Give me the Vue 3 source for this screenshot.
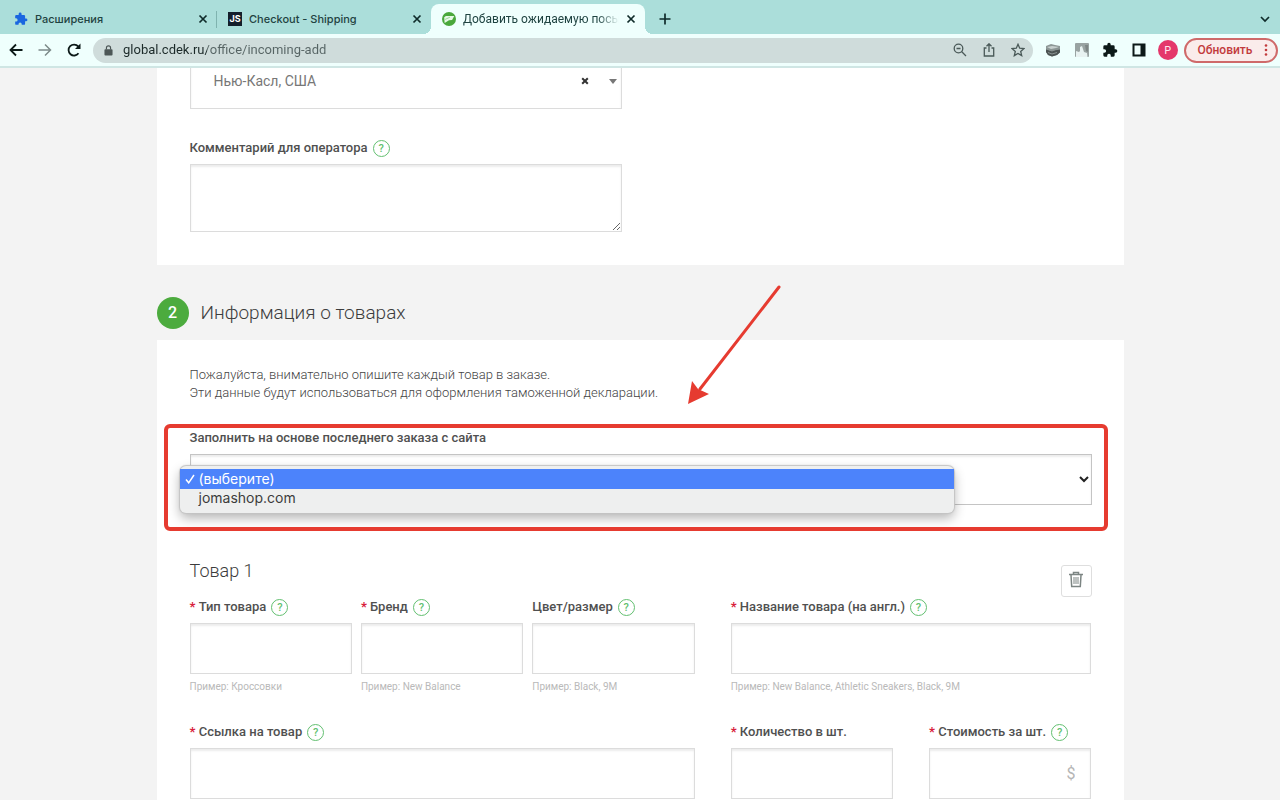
<script setup>
import { ref } from 'vue'

const tabs = [
  { title: 'Расширения', icon: 'puzzle' },
  { title: 'Checkout - Shipping', icon: 'js' },
  { title: 'Добавить ожидаемую посылк', icon: 'cdek', active: true },
]

const address = ref('global.cdek.ru/office/incoming-add')

const goodsLeft = [
  { id: 'kind', label: 'Тип товара', required: true, hint: 'Пример: Кроссовки' },
  { id: 'brand', label: 'Бренд', required: true, hint: 'Пример: New Balance' },
  { id: 'color', label: 'Цвет/размер', required: false, hint: 'Пример: Black, 9M' },
]
</script>

<template>
  <div class="browser">
    <header class="tabbar">
      <div v-for="t in tabs" :key="t.title" class="tab" :class="{ active: t.active }">
        <svg v-if="t.icon === 'puzzle'" class="favicon" viewBox="0 0 24 24" aria-hidden="true">
          <path fill="#1a66e0" d="M20.500 11H19V7a2 2 0 0 0-2-2h-4V3.500a2.500 2.500 0 0 0-5 0V5H4a2 2 0 0 0-2 2v3.800h1.500a2.700 2.700 0 0 1 0 5.400H2V20a2 2 0 0 0 2 2h3.800v-1.500a2.700 2.700 0 0 1 5.400 0V22H17a2 2 0 0 0 2-2v-4h1.500a2.500 2.500 0 0 0 0-5z" />
        </svg>
        <span v-else-if="t.icon === 'js'" class="favicon js">JS</span>
        <svg v-else class="favicon" viewBox="0 0 16 16" aria-hidden="true">
          <circle cx="8" cy="8" r="8" fill="#4aa83c" />
          <path fill="#e6f8e6" d="M2.500 6l2-1.500h9.500L11.500 9 8 9.500 3 12.500z" />
          <path fill="none" stroke="#8fd08a" stroke-width="1" d="M3.500 8.500L9 6" />
        </svg>
        <span class="tab-title">{{ t.title }}</span>
        <button class="tab-close" aria-label="Закрыть вкладку">
          <svg viewBox="0 0 10 10"><path d="M1.500 1.500l7 7M8.500 1.500l-7 7" /></svg>
        </button>
      </div>
      <button class="tab-new" aria-label="Новая вкладка">
        <svg viewBox="0 0 12 12"><path d="M6 .5v11M.5 6h11" /></svg>
      </button>
      <button class="tab-search" aria-label="Поиск вкладок">
        <svg viewBox="0 0 10 10"><path d="M1 3l4 4 4-4" /></svg>
      </button>
    </header>

    <div class="toolbar">
      <nav class="nav">
        <button aria-label="Назад">
          <svg viewBox="0 0 14 14"><path d="M13.500 7H1.500M7 1.500L1.500 7 7 12.500" /></svg>
        </button>
        <button class="faded" aria-label="Вперёд">
          <svg viewBox="0 0 14 14"><path d="M.5 7h12M7 1.500L12.500 7 7 12.500" /></svg>
        </button>
        <button aria-label="Обновить страницу">
          <svg viewBox="0 0 14 14"><path d="M11.500 10.300A5.500 5.500 0 1 1 11.200 3.400L12.500 4.800" /><path class="solid" d="M13.500 .5v5.500H8z" /></svg>
        </button>
      </nav>

      <div class="omnibox">
        <svg class="lock" viewBox="0 0 10 12" aria-hidden="true">
          <rect x=".5" y="4.500" width="9" height="7" rx="1" fill="#4c5656" />
          <path d="M2.700 5V3.200a2.300 2.300 0 0 1 4.600 0V5" fill="none" stroke="#4c5656" stroke-width="1.300" />
        </svg>
        <input v-model="address" class="url" type="text" aria-label="Адрес" />
        <div class="omni-actions">
          <button aria-label="Масштаб">
            <svg viewBox="0 0 14 14"><circle cx="5.500" cy="5.500" r="4.300" /><path d="M8.800 8.800l4.200 4.200M3.500 5.500h4" /></svg>
          </button>
          <button aria-label="Поделиться">
            <svg viewBox="0 0 14 14"><path d="M4.500 5H2.300v8h9.400V5H9.500M7 9V1M4.500 3.300L7 .8l2.500 2.500" /></svg>
          </button>
          <button aria-label="Добавить в закладки">
            <svg viewBox="0 0 14 14"><path d="M7 1.300l1.700 3.900 4.200.4-3.200 2.800 1 4.200L7 10.400l-3.700 2.200 1-4.200L1.100 5.600l4.200-.4z" /></svg>
          </button>
        </div>
      </div>

      <div class="extensions">
        <button aria-label="Расширение 1">
          <svg viewBox="0 0 16 16">
            <path fill="#8d9796" d="M1 4l5-2 4 1 5 1v6l-3 3-5 1.500L3 13l-2-3z" />
            <path fill="#c7cfce" d="M2 5l5-1 7 1-3 1-5 1z" />
            <path fill="#4b5352" d="M1 7.500l5 1.500 9-1.500v3L12 13l-5 1.500L3 13l-2-3z" />
            <path fill="none" stroke="#8a9392" d="M2 7l5 2 7-3M3 10.500l4 1.500 5-1.500" />
          </svg>
        </button>
        <button aria-label="Расширение 2">
          <svg viewBox="0 0 16 16">
            <rect x="1" y="1" width="14" height="14" rx="1" fill="#99a3a2" />
            <path fill="#e8f2f1" d="M2 15V9l3 1 1-1V5l2-1 1 3 1 3 3 1 .5 4z" />
            <path fill="#7d8685" d="M11 3h3v7l-2-1z" />
          </svg>
        </button>
        <button aria-label="Расширения">
          <svg viewBox="0 0 24 24"><path fill="#0c1918" d="M20.500 11H19V7a2 2 0 0 0-2-2h-4V3.500a2.500 2.500 0 0 0-5 0V5H4a2 2 0 0 0-2 2v3.800h1.500a2.700 2.700 0 0 1 0 5.400H2V20a2 2 0 0 0 2 2h3.800v-1.500a2.700 2.700 0 0 1 5.400 0V22H17a2 2 0 0 0 2-2v-4h1.500a2.500 2.500 0 0 0 0-5z" /></svg>
        </button>
        <button aria-label="Боковая панель">
          <svg viewBox="0 0 16 16"><path fill="#0c1918" fill-rule="evenodd" d="M1.500 1.500h13v13h-13zM3.500 3.500v9h6v-9z" /></svg>
        </button>
        <button class="avatar" aria-label="Профиль"><span>P</span></button>
      </div>

      <button class="update">
        Обновить
        <svg viewBox="0 0 4 12" aria-hidden="true"><circle cx="2" cy="1.500" r="1.300" /><circle cx="2" cy="6" r="1.300" /><circle cx="2" cy="10.500" r="1.300" /></svg>
      </button>
    </div>

    <main class="page">
      <div class="container">
        <section class="card first">
          <div class="half">
            <div class="city">
              <select aria-label="Город доставки"><option>Нью-Касл, США</option></select>
              <button class="clear" aria-label="Очистить">
                <svg viewBox="0 0 8 8"><path d="M1.200 1.200l5.600 5.600M6.800 1.200L1.200 6.800" /></svg>
              </button>
              <svg class="caret" viewBox="0 0 8 5" aria-hidden="true"><path d="M0 0h8L4 5z" /></svg>
            </div>
            <div class="field comment">
              <div class="label-row">
                <label for="comment">Комментарий для оператора</label>
                <button class="help" aria-label="Подсказка">?</button>
              </div>
              <textarea id="comment"></textarea>
            </div>
          </div>
        </section>

        <div class="step">
          <span class="num">2</span>
          <h2>Информация о товарах</h2>
        </div>

        <section class="card second">
          <p class="intro">Пожалуйста, внимательно опишите каждый товар в заказе.<br />Эти данные будут использоваться для оформления таможенной декларации.</p>

          <div class="field template">
            <div class="label-row"><label for="template">Заполнить на основе последнего заказа с сайта</label></div>
            <div class="select-wrap">
              <select id="template"><option></option></select>
              <svg class="chevron" viewBox="0 0 10 7" aria-hidden="true"><path d="M1 1l4 4 4-4" /></svg>
              <ul class="menu" role="listbox" aria-label="Сайт">
                <li class="chosen" role="option" aria-selected="true">
                  <svg viewBox="0 0 10 10" aria-hidden="true"><path d="M1 5.500l2.700 3.300L9 1" /></svg>(выберите)
                </li>
                <li role="option" aria-selected="false">jomashop.com</li>
              </ul>
            </div>
            <div class="frame"></div>
            <svg class="arrow" viewBox="0 0 96 122" aria-hidden="true">
              <path class="shaft" d="M93 3L14 105" />
              <path class="head" d="M2 120l4-23 6 8 11 5z" />
            </svg>
          </div>

          <div class="item-head">
            <h3>Товар 1</h3>
            <button class="trash" aria-label="Удалить товар">
              <svg viewBox="0 0 14 17"><path d="M0 3.500h14M4.500 3V1.500h5V3M2 4l.7 11.500h8.600L12 4" /><path class="bars" d="M5 6v7M7 6v7M9 6v7" /></svg>
            </button>
          </div>

          <div class="cols">
            <div class="thirds">
              <div v-for="f in goodsLeft" :key="f.id" class="field">
                <div class="label-row">
                  <label :for="f.id"><b v-if="f.required">* </b>{{ f.label }}</label>
                  <button class="help" aria-label="Подсказка">?</button>
                </div>
                <input :id="f.id" type="text" />
                <small>{{ f.hint }}</small>
              </div>
            </div>
            <div class="field">
              <div class="label-row">
                <label for="name"><b>* </b>Название товара (на англ.)</label>
                <button class="help" aria-label="Подсказка">?</button>
              </div>
              <input id="name" type="text" />
              <small>Пример: New Balance, Athletic Sneakers, Black, 9M</small>
            </div>
          </div>

          <div class="cols">
            <div class="field">
              <div class="label-row">
                <label for="link"><b>* </b>Ссылка на товар</label>
                <button class="help" aria-label="Подсказка">?</button>
              </div>
              <input id="link" type="text" />
            </div>
            <div class="halves">
              <div class="field">
                <div class="label-row"><label for="qty"><b>* </b>Количество в шт.</label></div>
                <input id="qty" type="text" />
              </div>
              <div class="field">
                <div class="label-row">
                  <label for="cost"><b>* </b>Стоимость за шт.</label>
                  <button class="help" aria-label="Подсказка">?</button>
                </div>
                <input id="cost" class="cost" type="text" placeholder="$" />
              </div>
            </div>
          </div>
        </section>
      </div>
    </main>
  </div>
</template>

<style>
body { margin: 0; }
</style>

<style scoped>
* { box-sizing: border-box; }
.browser {
  display: flex;
  flex-direction: column;
  height: 100vh;
  overflow: hidden;
  font-family: Roboto, "Liberation Sans", sans-serif;
  color: #444;
}
button {
  display: flex;
  align-items: center;
  justify-content: center;
  border: 0;
  padding: 0;
  background: none;
  font-family: inherit;
  flex: none;
}
svg { flex: none; }

.tabbar {
  flex: none;
  display: flex;
  align-items: flex-end;
  height: 34px;
  padding-left: 3px;
  background: #abdeda;
}
.tab {
  position: relative;
  display: flex;
  align-items: center;
  gap: 7px;
  flex: 0 1 214px;
  min-width: 0;
  height: 30px;
  padding: 0 9px 0 11px;
  border-radius: 8px 8px 0 0;
  font: 500 11px/16px Inter, sans-serif;
  color: #1f4341;
}
.tab:first-child::after {
  content: "";
  position: absolute;
  right: 0;
  top: 7px;
  width: 1px;
  height: 17px;
  background: #7fb3af;
}
.tab.active { background: #effffd; }
.tab.active::before,
.tab.active::after {
  content: "";
  position: absolute;
  bottom: 0;
  width: 8px;
  height: 8px;
}
.tab.active::before { left: -8px; background: radial-gradient(circle at 0 0, #abdeda 8px, #effffd 8px); }
.tab.active::after { right: -8px; background: radial-gradient(circle at 100% 0, #abdeda 8px, #effffd 8px); }
.favicon { width: 14px; height: 14px; flex: none; }
.favicon.js {
  background: #141f2b;
  color: #fff;
  font: 700 9px/14px Inter, sans-serif;
  text-align: center;
}
.tab-title {
  flex: 1;
  min-width: 0;
  overflow: hidden;
  white-space: nowrap;
}
.active .tab-title {
  font: 400 12px/16px Roboto, sans-serif;
  -webkit-mask-image: linear-gradient(90deg, #000 86%, transparent);
  mask-image: linear-gradient(90deg, #000 86%, transparent);
}
.tab-close svg { width: 10px; height: 10px; }
.tab-close path, .tab-new path, .tab-search path {
  fill: none;
  stroke: #0f2b2a;
  stroke-width: 1.700;
}
.tab-new { width: 40px; height: 30px; }
.tab-new svg { width: 12px; height: 12px; }
.tab-search { width: 30px; height: 30px; margin-left: auto; }
.tab-search svg { width: 10px; height: 10px; }

.toolbar {
  flex: none;
  display: flex;
  align-items: center;
  height: 34px;
  padding: 0 2px 0 1px;
  background: #effffd;
  border-bottom: 2px solid #cfe6e4;
}
.nav { display: flex; flex: none; margin-right: 5px; }
.nav button { width: 29px; height: 28px; }
.nav svg { width: 14px; height: 14px; }
.nav path { fill: none; stroke: #0c1918; stroke-width: 1.800; }
.nav .solid { fill: #0c1918; stroke: none; }
.nav .faded path { stroke: #7d8b8a; stroke-width: 1.500; }
.omnibox {
  flex: 1;
  min-width: 0;
  display: flex;
  align-items: center;
  height: 25px;
  padding: 0 1px 0 11px;
  border-radius: 13px;
  background: #cfdcdb;
}
.lock { width: 9px; height: 11px; }
.url {
  flex: 1;
  min-width: 0;
  margin-left: 10px;
  border: 0;
  padding: 0;
  outline: 0;
  font-size: 13px;
  line-height: 20px;
  color: transparent;
  background: linear-gradient(90deg, #1b2928 84px, #566464 84px);
  -webkit-background-clip: text;
  background-clip: text;
}
.omni-actions { display: grid; grid-template-columns: repeat(3, 1fr); flex: 0 0 86px; }
.omni-actions button, .extensions button { width: 100%; height: 24px; }
.omni-actions svg { width: 14px; height: 14px; fill: none; stroke: #4a5958; stroke-width: 1.300; }
.extensions { display: grid; grid-template-columns: repeat(5, 1fr); flex: 0 0 143px; margin: 0 2px 0 6px; }
.extensions svg { width: 16px; height: 16px; }
.avatar span {
  width: 20px;
  height: 20px;
  border-radius: 50%;
  background: #e4386b;
  color: #ffe6ee;
  font: 400 11px/20px Inter, sans-serif;
}
.update {
  gap: 12px;
  height: 25px;
  width: 94px;
  padding-left: 4px;
  border: 2px solid #cf6a6a;
  border-radius: 13px;
  background: #faeceb;
  color: #c23a3c;
  font-size: 12px;
  font-weight: 500;
  line-height: 16px;
}
.update svg { width: 4px; height: 12px; fill: #c23a3c; }

.page { flex: 1; min-height: 0; overflow: hidden; background: #f3f3f3; }
.container { max-width: 967px; margin: 0 auto; }
.card { background: #fff; padding: 0 32px 0 33px; }
.first { display: flow-root; padding-bottom: 33px; }
.half { width: 48%; }
.city { position: relative; margin-top: -10px; }
.city select { padding: 0 60px 6px 23px; color: #777; font-size: 14px; }
.clear { position: absolute; right: 32px; top: 18px; width: 10px; height: 10px; }
.clear svg { width: 8px; height: 8px; }
.clear path { fill: none; stroke: #333; stroke-width: 2; }
.caret { position: absolute; right: 5px; top: 21px; width: 8px; height: 5px; fill: #777; }
.comment { margin-top: 29px; }

.field { display: flex; flex-direction: column; min-width: 0; }
.label-row { display: flex; align-items: center; gap: 5px; height: 20px; margin-bottom: 6px; }
label { font-size: 13px; font-weight: 500; line-height: 20px; white-space: nowrap; color: #505050; }
label b { color: #d8213b; }
.help {
  width: 17px;
  height: 17px;
  border: 1px solid #62bf70;
  border-radius: 50%;
  color: #62bf70;
  font-size: 11px;
  font-weight: 500;
  line-height: 15px;
}
input, select, textarea { font-family: inherit; border-radius: 0; outline: 0; }
.field input, .field textarea, .field select, .city select {
  display: block;
  width: 100%;
  height: 51px;
  border: 1px solid #dcdcdc;
  background: #fff;
  appearance: none;
  box-shadow: inset 0 2px 2px #ececec;
}
.field textarea { height: 68px; }
.field .cost { padding-right: 15px; text-align: right; font-size: 16px; }
.cost::placeholder { color: #b5b5b5; }
small { margin-top: 6px; font-size: 10px; line-height: 14px; font-weight: 400; color: #b9b9b9; white-space: nowrap; }

.step { display: flex; align-items: center; gap: 12px; height: 75px; padding-top: 21px; }
.num {
  width: 32px;
  height: 32px;
  border-radius: 50%;
  background: #4cab3e;
  color: #fff;
  font-size: 16px;
  font-weight: 500;
  line-height: 32px;
  text-align: center;
}
h2, h3 { margin: 0; font-weight: 300; color: #3c3c3c; }
h2 { font-size: 19px; line-height: 26px; }
h3 { font-size: 18px; line-height: 26px; }

.second { padding-top: 26px; min-height: 600px; }
.intro { margin: 0 0 26px; font-size: 13px; line-height: 18px; font-weight: 300; color: #444; }
.template { position: relative; }
.select-wrap { position: relative; }
.field.template select { border-color: #c4c4c4; }
.chevron { position: absolute; right: 3px; top: 22px; width: 10px; height: 7px; fill: none; stroke: #222; stroke-width: 2; }
.menu {
  position: absolute;
  left: -10px;
  top: 12px;
  width: 774px;
  margin: 0;
  padding: 3px 0 4px;
  list-style: none;
  border-radius: 6px;
  background: #eeefef;
  box-shadow: 0 0 1px 1px #c4c4c4, 0 5px 12px rgba(0, 0, 0, 0.3);
  font: 400 14px/20px Inter, sans-serif;
  color: #3c3c3c;
}
.menu li { height: 20px; padding-left: 19px; line-height: 18px; }
.menu .chosen { display: flex; align-items: center; gap: 4px; padding-left: 5px; background: #4c83fb; color: #fff; }
.menu svg { width: 10px; height: 10px; fill: none; stroke: #fff; stroke-width: 1.500; }
.frame {
  position: absolute;
  inset: -4px -16px -26px -26px;
  border: 4px solid #e63b30;
  border-radius: 6px;
  pointer-events: none;
}
.arrow { position: absolute; left: 496px; top: -144px; width: 96px; height: 122px; pointer-events: none; }
.shaft { fill: none; stroke: #e63b30; stroke-width: 3; stroke-linecap: round; }
.head { fill: #e63b30; }

.item-head { display: flex; justify-content: space-between; min-height: 39px; margin-top: 53px; }
.trash { align-self: flex-end; width: 31px; height: 32px; padding-bottom: 3px; border: 1px solid #dedede; border-radius: 3px; background: #fff; }
.trash svg { width: 14px; height: 17px; fill: none; stroke: #7c8583; stroke-width: 1.500; }
.trash .bars { stroke-width: 1; }
.cols { display: grid; grid-template-columns: minmax(0, 7fr) minmax(0, 5fr); column-gap: 36px; }
.cols + .cols { margin-top: 28px; }
.thirds { display: grid; grid-template-columns: repeat(3, minmax(0, 1fr)); column-gap: 9px; }
.halves { display: grid; grid-template-columns: repeat(2, minmax(0, 1fr)); column-gap: 36px; }
</style>
